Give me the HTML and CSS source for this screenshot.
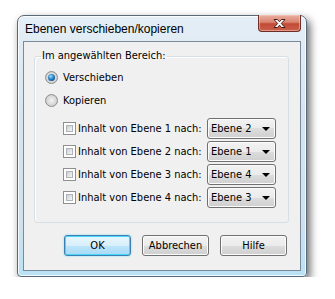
FILE: index.html
```html
<!DOCTYPE html>
<html>
<head>
    <title>Ebenen verschieben/kopieren</title>
    <link rel="stylesheet" href="styles.css">
</head>
<body>
    <div class="window">
        <div class="titlebar">
            <span class="title">Ebenen verschieben/kopieren</span>
            <button class="close" aria-label="Schließen">
                <svg width="15" height="11" viewBox="0 0 15 11">
                    <path d="M2 1.5 L5.5 1.5 L7.5 3.8 L9.5 1.5 L13 1.5 L9.3 5.5 L13 9.5 L9.5 9.5 L7.5 7.2 L5.5 9.5 L2 9.5 L5.7 5.5 Z" fill="#fff" stroke="#4a1d17" stroke-width="1" stroke-linejoin="round"/>
                </svg>
            </button>
        </div>
        <div class="client">
            <fieldset class="group">
                <legend>Im angewählten Bereich:</legend>
                <div class="row">
                    <span class="radio checked"></span>
                    <span class="label">Verschieben</span>
                </div>
                <div class="row">
                    <span class="radio"></span>
                    <span class="label">Kopieren</span>
                </div>
                <div class="layers">
                    <div class="row layer">
                        <span class="check"></span>
                        <span class="label layer-label">Inhalt von Ebene 1 nach:</span>
                        <div class="combo"><span>Ebene 2</span><i class="arrow"></i></div>
                    </div>
                    <div class="row layer">
                        <span class="check"></span>
                        <span class="label layer-label">Inhalt von Ebene 2 nach:</span>
                        <div class="combo"><span>Ebene 1</span><i class="arrow"></i></div>
                    </div>
                    <div class="row layer">
                        <span class="check"></span>
                        <span class="label layer-label">Inhalt von Ebene 3 nach:</span>
                        <div class="combo"><span>Ebene 4</span><i class="arrow"></i></div>
                    </div>
                    <div class="row layer">
                        <span class="check"></span>
                        <span class="label layer-label">Inhalt von Ebene 4 nach:</span>
                        <div class="combo"><span>Ebene 3</span><i class="arrow"></i></div>
                    </div>
                </div>
            </fieldset>
            <div class="buttons">
                <button class="btn default">OK</button>
                <button class="btn">Abbrechen</button>
                <button class="btn">Hilfe</button>
            </div>
        </div>
    </div>
</body>
</html>
```

FILE: styles.css
```css
body{
    margin: 0;
    padding: 15px 0 0 17px;
    background-color: #ffffff;
    font-family: "DejaVu Sans Condensed", "DejaVu Sans", sans-serif;
    font-size: 11px;
    color: #000;
}
.window{
    width: 290px;
    height: 262px;
    box-sizing: border-box;
    border: 1px solid #5b6878;
    border-radius: 7px 7px 4px 4px;
    background: linear-gradient(#e4eef6 0, #d5e4f0 40%, #cfe1ee 80%, #b9e2f5 100%);
    box-shadow: 3px 4px 9px rgba(0, 0, 0, 0.6), inset 0 0 0 1px rgba(255, 255, 255, 0.8);
    padding: 0 5px 5px 5px;
    display: flex;
    flex-direction: column;
}
.titlebar{
    height: 25px;
    display: flex;
    justify-content: space-between;
    align-items: flex-start;
}
.title{
    font-family: "Liberation Sans", sans-serif;
    font-size: 12px;
    margin: 6px 0 0 2px;
    color: #000;
}
.close{
    width: 43px;
    height: 17px;
    margin-top: -1px;
    padding: 0;
    border: 1px solid #6b2d24;
    border-top: none;
    border-radius: 0 0 4px 4px;
    background: linear-gradient(#eab0a2 0, #d98571 45%, #c24a35 55%, #c8604a 100%);
    box-shadow: inset 0 0 0 1px rgba(255, 210, 200, 0.5);
    display: flex;
    align-items: center;
    justify-content: center;
}
.client{
    flex: 1;
    border: 1px solid #7b8a99;
    background-color: #f0f0f0;
    display: flex;
    flex-direction: column;
}
.group{
    margin: 7px 11px 0 10px;
    padding: 3px 0 13px 6px;
    border: 1px solid #d5dfe5;
    border-radius: 3px;
    box-shadow: inset 1px 1px 0 #fff;
}
.group legend{
    padding: 0 1px;
    line-height: 14px;
}
.row{
    height: 23px;
    display: flex;
    align-items: center;
}
.radio{
    width: 11px;
    height: 11px;
    margin: 0 5px 0 4px;
    border: 1px solid #8e8f8f;
    border-radius: 50%;
    background: radial-gradient(circle at 50% 50%, #f4f4f4 0, #d6d6d6 60%, #c7c7c7 75%, #fdfdfd 100%);
    display: flex;
    align-items: center;
    justify-content: center;
}
.radio.checked::after{
    content: "";
    width: 7px;
    height: 7px;
    border-radius: 50%;
    background: radial-gradient(circle at 40% 35%, #a9e1fb 0, #3b97d3 35%, #0b5aa3 70%, #143d66 100%);
}
.layers{
    margin-top: 5px;
}
.layer{
    padding-left: 22px;
}
.check{
    width: 13px;
    height: 13px;
    box-sizing: border-box;
    border: 1px solid #8f8f8f;
    background: #fff;
    padding: 2px;
    margin-right: 2px;
    flex: none;
}
.check::before{
    content: "";
    display: block;
    width: 100%;
    height: 100%;
    box-sizing: border-box;
    border: 1px solid #aeb3b9;
    background: linear-gradient(135deg, #cbcfd5 0, #f6f6f6 100%);
}
.layer-label{
    width: 129px;
}
.combo{
    width: 69px;
    height: 21px;
    box-sizing: border-box;
    border: 1px solid #707070;
    border-radius: 3px;
    background: linear-gradient(#f2f2f2 0, #ebebeb 50%, #dddddd 50%, #cfcfcf 100%);
    box-shadow: inset 0 0 0 1px #fcfcfc;
    display: flex;
    align-items: center;
    justify-content: space-between;
    padding: 0 5px 0 3px;
}
.arrow{
    width: 0;
    height: 0;
    border-left: 4px solid transparent;
    border-right: 4px solid transparent;
    border-top: 4px solid #000;
}
.buttons{
    margin: 12px 13px 0 0;
    display: flex;
    justify-content: flex-end;
    gap: 11px;
}
.btn{
    width: 67px;
    height: 21px;
    padding: 0;
    font-family: "DejaVu Sans Condensed", "DejaVu Sans", sans-serif;
    font-size: 11px;
    color: #000;
    border: 1px solid #707070;
    border-radius: 3px;
    background: linear-gradient(#f2f2f2 0, #ebebeb 50%, #dddddd 50%, #cfcfcf 100%);
    box-shadow: inset 0 0 0 1px #fcfcfc;
}
.btn.default{
    border-color: #3c7fb1;
    background: linear-gradient(#e8f6fd 0, #d8effb 50%, #bee6fd 50%, #a7d9f5 100%);
    box-shadow: inset 0 0 0 1px #48d6fb, 0 0 2px #7cd3f6;
}
```
